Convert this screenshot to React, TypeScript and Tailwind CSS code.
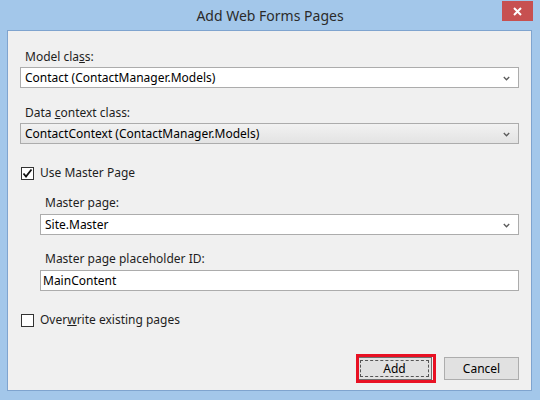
import React from "react";

const Chevron = () => (
  <svg width="7" height="5" viewBox="0 0 7 5" className="shrink-0 mt-[1px]">
    <path d="M0.8 1 L3.5 3.8 L6.2 1" fill="none" stroke="#5a5a5a" strokeWidth="1.3" />
  </svg>
);

const Dropdown = ({ text, gray }: { text: string; gray?: boolean }) => (
  <div
    className={
      "h-[21px] border border-[#acacac] flex items-center justify-between pl-[4px] pr-[8px] text-[12px] text-black " +
      (gray ? "bg-gradient-to-b from-[#f2f2f2] to-[#e3e3e3]" : "bg-white")
    }
  >
    <span>{text}</span>
    <Chevron />
  </div>
);

const CheckBox = ({ checked }: { checked?: boolean }) => (
  <div className="w-[13px] h-[13px] border border-[#333333] bg-white flex items-center justify-center shrink-0">
    {checked && (
      <svg width="11" height="11" viewBox="0 0 11 11">
        <path d="M1.5 5.5 L4 8.5 L9.5 1.5" fill="none" stroke="#111" strokeWidth="1.8" />
      </svg>
    )}
  </div>
);

export default function App() {
  return (
    <div
      className="w-[540px] h-[400px] bg-[#a3c7ea] flex flex-col text-[#1e1e1e]"
      style={{ fontFamily: '"Noto Sans", "Open Sans", sans-serif' }}
    >
      <div className="h-[30px] relative flex items-center justify-center">
        <span className="text-[14px] text-[#2b2b2b] mt-[1px]">Add Web Forms Pages</span>
        <div className="absolute right-[7px] top-[1px] w-[31px] h-[20px] bg-[#c75050] flex items-center justify-center">
          <svg width="9" height="9" viewBox="0 0 9 9">
            <path d="M1 1 L8 8 M8 1 L1 8" stroke="#fff" strokeWidth="2" />
          </svg>
        </div>
      </div>
      <div className="ml-[7px] mr-[8px] h-[361px] border border-[#7fa4cf] bg-[#f0f0f0] flex flex-col px-[12px] pt-[16px] text-[12px] leading-[16px]">
        <div className="pl-[5px] pt-[2px]">
          Model cla<span className="underline">s</span>s:
        </div>
        <div className="mt-[2px]">
          <Dropdown text="Contact (ContactManager.Models)" />
        </div>
        <div className="pl-[5px] mt-[15px] pt-[2px]">
          Data <span className="underline">c</span>ontext class:
        </div>
        <div className="mt-[2px]">
          <Dropdown text="ContactContext (ContactManager.Models)" gray />
        </div>
        <div className="mt-[21px] flex items-center gap-[6px] pl-[1px]">
          <CheckBox checked />
          <span>Use Master Page</span>
        </div>
        <div className="pl-[20px]">
          <div className="pl-[5px] mt-[12px] pt-[2px]">Master page:</div>
          <div className="mt-[3px]">
            <Dropdown text="Site.Master" />
          </div>
          <div className="pl-[5px] mt-[14px] pt-[2px]">Master page placeholder ID:</div>
          <div className="mt-[3px] h-[21px] border border-[#acacac] bg-white flex items-center pl-[2px] text-black">
            MainContent
          </div>
        </div>
        <div className="mt-[21px] flex items-center gap-[6px] pl-[1px]">
          <CheckBox />
          <span>
            Over<span className="underline">w</span>rite existing pages
          </span>
        </div>
        <div className="mt-auto mb-[10px] flex justify-end gap-[12px]">
          <div className="relative w-[75px] h-[23px] border border-[#6f6f6f] bg-[#e1e1e1] p-[2px]">
            <div className="w-full h-full border border-dashed border-[#555] flex items-center justify-center text-black">
              Add
            </div>
            <div className="absolute left-[-2px] top-[-4px] w-[80px] h-[29px] border-[3px] border-[#e81123]" />
          </div>
          <div className="w-[75px] h-[23px] border border-[#adadad] bg-[#e1e1e1] flex items-center justify-center text-black">
            Cancel
          </div>
        </div>
      </div>
    </div>
  );
}
